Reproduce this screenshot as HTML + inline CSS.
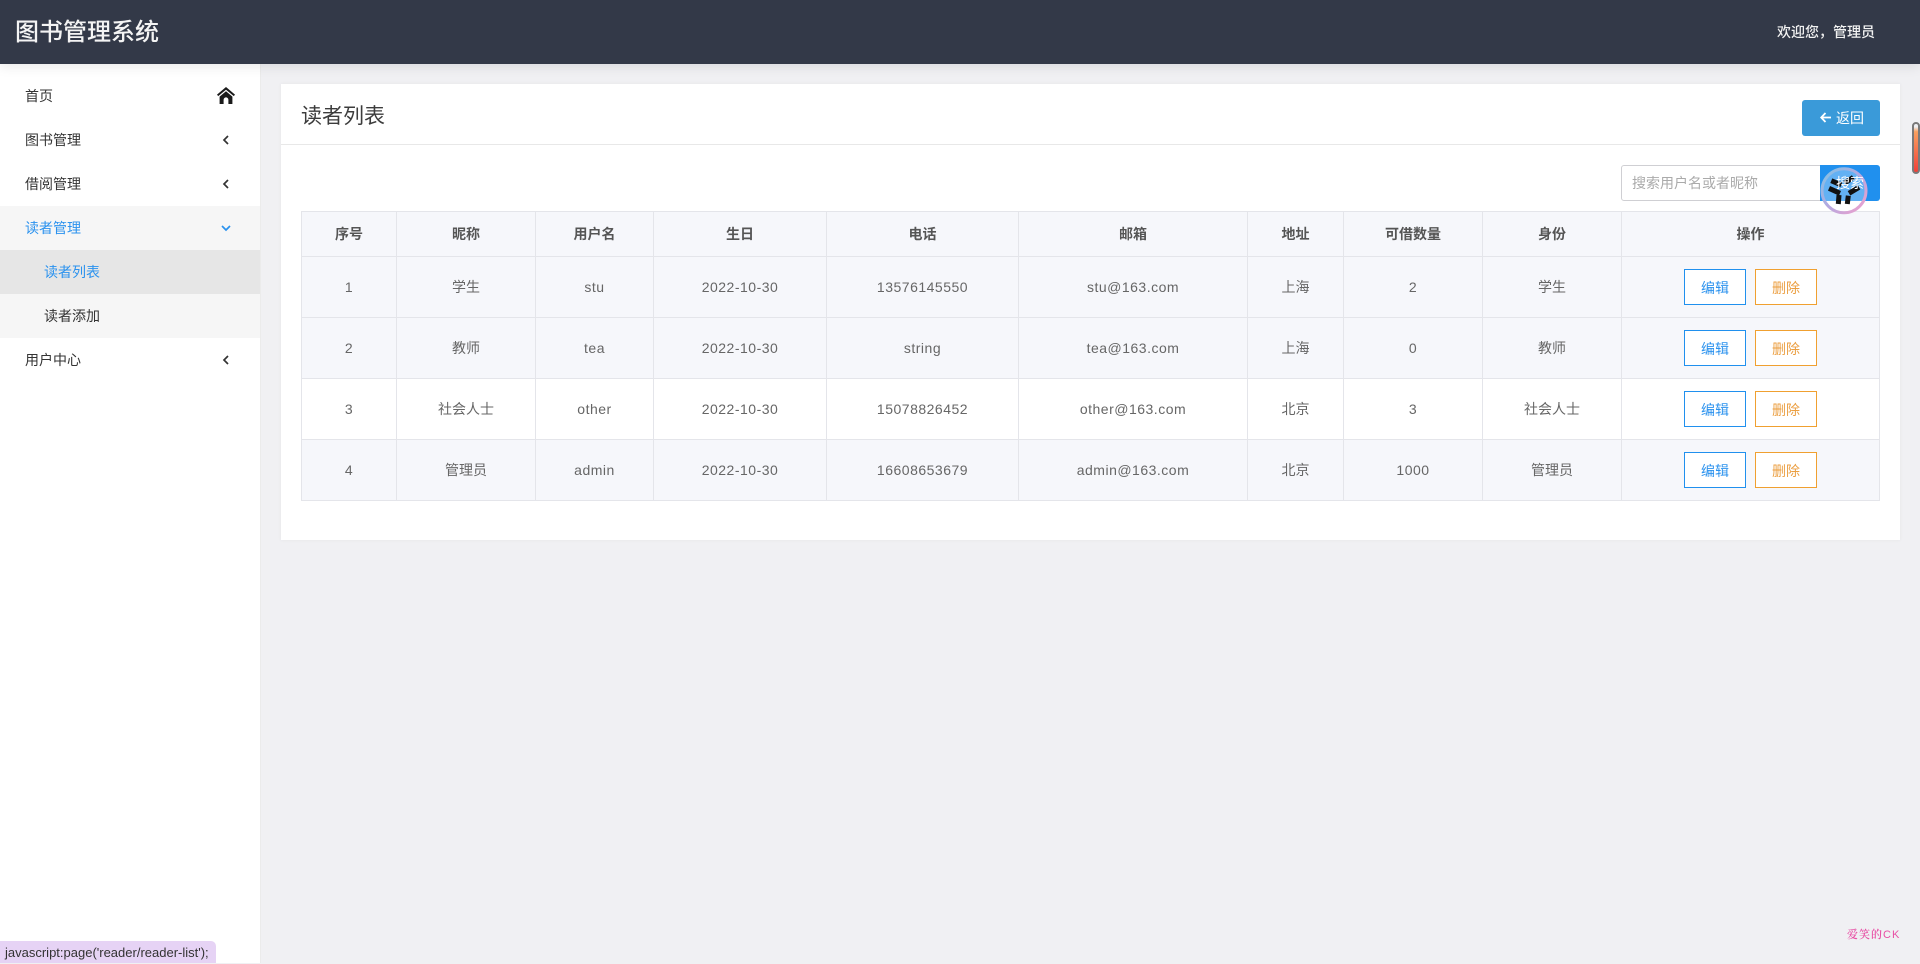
<!DOCTYPE html>
<html lang="zh-CN"><head><meta charset="utf-8"><title>图书管理系统</title>
<style>
*{box-sizing:border-box}
html,body{margin:0;padding:0;width:1920px;height:963px;overflow:hidden;background:#f0f0f3;font-family:"Liberation Sans","Noto Sans CJK SC",sans-serif;font-size:14px;color:#333}
.abs{position:absolute}
#hd{left:0;top:0;width:1920px;height:64px;background:#333948;color:#fff;box-shadow:0 2px 12px rgba(0,0,0,.1);z-index:3}
#hd .t{position:absolute;left:15px;top:15px;font-size:24px;line-height:36px;font-weight:500;color:#f4f4f4}
#hd .w{position:absolute;left:1777px;top:21px;line-height:22px;font-size:14px;color:#f2f2f2;font-weight:500}
#sd{left:0;top:64px;width:261px;height:899px;background:#fff;border-right:1px solid #ebebeb}
.m{position:absolute;left:0;width:260px;height:44px;line-height:44px;padding-left:25px;color:#333}
.m svg{position:absolute;left:218px;top:14px}
.s{padding-left:44px;background:#f6f6f6}
.on{color:#2b92ee}
#card{left:281px;top:84px;width:1619px;height:456px;background:#fff;box-shadow:0 0 4px rgba(0,0,0,.05)}
#card .ln{position:absolute;left:0;top:60px;width:100%;height:1px;background:#e8e8e8}
#ttl{left:301px;top:99px;font-size:21px;line-height:36px;color:#3c3c3c;font-weight:400}
#back{left:1802px;top:100px;width:78px;height:36px;background:#3a9ad9;border-radius:3px;color:#fff;line-height:37px;padding-left:34px;font-size:14px}
#inp{left:1621px;top:165px;width:200px;height:36px;background:#fff;border:1px solid #cfcfd3;border-radius:3px 0 0 3px;color:#aaa;line-height:34px;padding-left:10px}
#btn{left:1820px;top:165px;width:60px;height:36px;background:#2090ee;border-radius:0 3px 3px 0}
#btxt{left:1820px;top:165px;width:60px;height:36px;color:#fff;line-height:36px;text-align:center;z-index:2}
table{position:absolute;left:301px;top:211px;width:1578px;border-collapse:collapse;table-layout:fixed;color:#666}
th,td{border:1px solid #e4e5ea;text-align:center;padding:0;font-size:14px;letter-spacing:0}
th{height:45px;background:#f6f7fb;font-weight:700;color:#555;font-size:14px}
td{height:61px;letter-spacing:.5px}
td.c{letter-spacing:0}
tr.g td{background:#f6f7fb}
.b{display:inline-block;width:62px;height:36px;line-height:36px;background:#fff;font-size:14px;vertical-align:middle;letter-spacing:0}
.e{border:1px solid #2090ee;color:#2b92ee;margin-right:9px}
.d{border:1px solid #f0a030;color:#eb9e40}
#stat{left:0;top:941px;width:216px;height:22px;background:#e6d3f5;border-radius:0 5px 0 0;font-size:13px;line-height:23px;padding-left:5px;color:#333;white-space:nowrap}
#wm{left:1847px;top:926px;font-size:11px;line-height:18px;color:#e84fa5;font-family:"Liberation Sans","Noto Serif CJK SC",serif;letter-spacing:1px;white-space:nowrap}
#wm b{font-weight:600}
#sb{left:1912px;top:122px;width:8px;height:52px;border:2px solid #7a7a7a;border-radius:4px;background:linear-gradient(#f0f0f3 0,#f0f0f3 6%,#f9a060 16%,#f0403a 100%)}
</style></head><body>
<div id="hd" class="abs"><div class="t">图书管理系统</div><div class="w">欢迎您，管理员</div></div>
<div id="sd" class="abs">
<div class="m" style="top:10px">首页<svg style="left:217px;top:13px;position:absolute" width="18" height="17" viewBox="0 0 18 17"><path fill="#1a1a1a" d="M9 0 0 7.6l1.2 1.5L9 2.7l7.8 6.4L18 7.6zM2.6 9.6V17h4v-4.2a2.4 2.4 0 0 1 4.8 0V17h4V9.6L9 4.3z"/></svg></div>
<div class="m" style="top:54px">图书管理<svg width="16" height="16" viewBox="0 0 16 16"><path fill="none" stroke="#333" stroke-width="1.7" d="M10 4 6 8l4 4"/></svg></div>
<div class="m" style="top:98px">借阅管理<svg width="16" height="16" viewBox="0 0 16 16"><path fill="none" stroke="#333" stroke-width="1.7" d="M10 4 6 8l4 4"/></svg></div>
<div class="m on" style="top:142px;background:#f6f6f6">读者管理<svg width="16" height="16" viewBox="0 0 16 16"><path fill="none" stroke="#2b92ee" stroke-width="1.7" d="M4 6l4 4 4-4"/></svg></div>
<div class="m s on" style="top:186px;background:#e6e6e6">读者列表</div>
<div class="m s" style="top:230px">读者添加</div>
<div class="m" style="top:274px">用户中心<svg width="16" height="16" viewBox="0 0 16 16"><path fill="none" stroke="#333" stroke-width="1.7" d="M10 4 6 8l4 4"/></svg></div>
</div>
<div id="card" class="abs"><div class="ln"></div></div>
<div id="ttl" class="abs">读者列表</div>
<div id="back" class="abs">返回<svg style="position:absolute;left:18px;top:12px" width="11" height="11" viewBox="0 0 11 11"><path fill="none" stroke="#fff" stroke-width="1.8" d="M5.5 1 1.2 5.5 5.5 10M2 5.5h9"/></svg></div>
<div id="inp" class="abs">搜索用户名或者昵称</div>
<div id="btn" class="abs"></div>
<table>
<colgroup><col style="width:95px"><col style="width:139px"><col style="width:118px"><col style="width:173px"><col style="width:192px"><col style="width:229px"><col style="width:96px"><col style="width:139px"><col style="width:139px"><col style="width:258px"></colgroup>
<tr><th>序号</th><th>昵称</th><th>用户名</th><th>生日</th><th>电话</th><th>邮箱</th><th>地址</th><th>可借数量</th><th>身份</th><th>操作</th></tr>
<tr class="g"><td>1</td><td class="c">学生</td><td>stu</td><td>2022-10-30</td><td>13576145550</td><td>stu@163.com</td><td class="c">上海</td><td>2</td><td class="c">学生</td><td><span class="b e">编辑</span><span class="b d">删除</span></td></tr>
<tr class="g"><td>2</td><td class="c">教师</td><td>tea</td><td>2022-10-30</td><td>string</td><td>tea@163.com</td><td class="c">上海</td><td>0</td><td class="c">教师</td><td><span class="b e">编辑</span><span class="b d">删除</span></td></tr>
<tr><td>3</td><td class="c">社会人士</td><td>other</td><td>2022-10-30</td><td>15078826452</td><td>other@163.com</td><td class="c">北京</td><td>3</td><td class="c">社会人士</td><td><span class="b e">编辑</span><span class="b d">删除</span></td></tr>
<tr class="g"><td>4</td><td class="c">管理员</td><td>admin</td><td>2022-10-30</td><td>16608653679</td><td>admin@163.com</td><td class="c">北京</td><td>1000</td><td class="c">管理员</td><td><span class="b e">编辑</span><span class="b d">删除</span></td></tr>
</table>
<svg class="abs" style="left:1819px;top:166px;z-index:1" width="50" height="50" viewBox="0 0 50 50">
<defs><linearGradient id="r" x1="0" y1="0" x2="1" y2="1"><stop offset="0" stop-color="#7fc4e6"/><stop offset=".5" stop-color="#b5a8e0"/><stop offset="1" stop-color="#f2a0cc"/></linearGradient></defs>
<circle cx="25" cy="24.7" r="22" fill="#fff" fill-opacity=".3" stroke="url(#r)" stroke-width="3"/>
<g fill="none" stroke="#111" stroke-width="5"><path d="M12.3 14.7 22.3 19"/><path d="M34.3 11.3 25.7 17"/><path d="M10 22.3 21 27.3"/><path d="M40 21.3 30 27.3"/><path d="M19.3 38 20 29"/><path d="M28.3 38 29.3 29.7"/></g>
</svg>
<div id="btxt" class="abs">搜索</div>
<div id="sb" class="abs"></div>
<div id="stat" class="abs">javascript:page('reader/reader-list');</div>
<div id="wm" class="abs"><b>爱笑的</b>CK</div>
</body></html>
